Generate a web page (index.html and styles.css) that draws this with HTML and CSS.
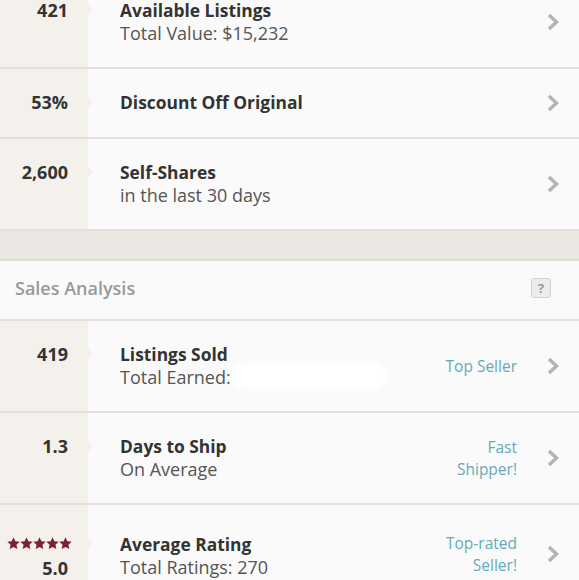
FILE: index.html
```html
<!DOCTYPE html>
<html>
<head>
<meta charset="utf-8">
<link rel="stylesheet" href="styles.css">
</head>
<body>
<div class="page">
  <div class="list first">
    <div class="row">
      <div class="num">421</div>
      <div class="main"><div class="title">Available Listings</div><div class="sub">Total Value: $15,232</div></div>
      <div class="chev"><svg width="12" height="18" viewBox="0 0 12 18"><path d="M2 2 L9.5 9 L2 16" fill="none" stroke="#b3b3b3" stroke-width="3.4"/></svg></div>
    </div>
    <div class="row">
      <div class="num">53%</div>
      <div class="main"><div class="title">Discount Off Original</div></div>
      <div class="chev"><svg width="12" height="18" viewBox="0 0 12 18"><path d="M2 2 L9.5 9 L2 16" fill="none" stroke="#b3b3b3" stroke-width="3.4"/></svg></div>
    </div>
    <div class="row">
      <div class="num">2,600</div>
      <div class="main"><div class="title">Self-Shares</div><div class="sub">in the last 30 days</div></div>
      <div class="chev"><svg width="12" height="18" viewBox="0 0 12 18"><path d="M2 2 L9.5 9 L2 16" fill="none" stroke="#b3b3b3" stroke-width="3.4"/></svg></div>
    </div>
  </div>
  <div class="band"></div>
  <div class="section-head">
    <span class="section-title">Sales Analysis</span>
    <span class="help">?</span>
  </div>
  <div class="list">
    <div class="row">
      <div class="num">419</div>
      <div class="main"><div class="title">Listings Sold</div><div class="sub">Total Earned: <span class="redact"></span></div></div>
      <div class="badge">Top Seller</div>
      <div class="chev"><svg width="12" height="18" viewBox="0 0 12 18"><path d="M2 2 L9.5 9 L2 16" fill="none" stroke="#b3b3b3" stroke-width="3.4"/></svg></div>
    </div>
    <div class="row">
      <div class="num">1.3</div>
      <div class="main"><div class="title">Days to Ship</div><div class="sub">On Average</div></div>
      <div class="badge">Fast<br>Shipper!</div>
      <div class="chev"><svg width="12" height="18" viewBox="0 0 12 18"><path d="M2 2 L9.5 9 L2 16" fill="none" stroke="#b3b3b3" stroke-width="3.4"/></svg></div>
    </div>
    <div class="row rating">
      <div class="num">
        <div class="stars">
          <svg width="65" height="13" viewBox="0 0 65 13">
            <defs><path id="st" d="M6.5 0.3 L8.32 4.29 L12.68 4.79 L9.45 7.76 L10.32 12.06 L6.5 9.9 L2.68 12.06 L3.55 7.76 L0.32 4.79 L4.68 4.29 Z"/></defs>
            <use href="#st" x="0"/><use href="#st" x="13"/><use href="#st" x="26"/><use href="#st" x="39"/><use href="#st" x="52"/>
          </svg>
        </div>
        5.0
      </div>
      <div class="main"><div class="title">Average Rating</div><div class="sub">Total Ratings: 270</div></div>
      <div class="badge">Top-rated<br>Seller!</div>
      <div class="chev"><svg width="12" height="18" viewBox="0 0 12 18"><path d="M2 2 L9.5 9 L2 16" fill="none" stroke="#b3b3b3" stroke-width="3.4"/></svg></div>
    </div>
  </div>
</div>
</body>
</html>
```
FILE: styles.css
```css
* { box-sizing: border-box; }
html, body { margin: 0; padding: 0; }
body {
  background: #fafafa;
  font-family: "Open Sans", "Liberation Sans", sans-serif;
  color: #333;
  width: 579px;
  height: 580px;
  overflow: hidden;
}
.page { width: 579px; }
.list.first { margin-top: -23px; }
.row {
  display: flex;
  align-items: stretch;
  border-bottom: 2px solid #e3dfdb;
  background: #fafafa;
}
.num {
  position: relative;
  width: 88px;
  flex: none;
  background: #f4f1ed;
  padding: 21px 20px 23px 0;
  text-align: right;
  font-weight: 700;
  font-size: 18px;
  line-height: 24px;
  color: #333;
}
.num::after {
  content: "";
  position: absolute;
  right: -5px;
  top: 27px;
  border-left: 5px solid #f4f1ed;
  border-top: 6px solid transparent;
  border-bottom: 6px solid transparent;
}
.main {
  flex: 1;
  padding: 21px 0 23px 32px;
}
.title {
  font-weight: 700;
  font-size: 17.4px;
  line-height: 24px;
  color: #333;
}
.sub {
  position: relative;
  font-size: 18px;
  line-height: 22px;
  color: #555;
}
.badge {
  align-self: center;
  text-align: right;
  font-size: 15.5px;
  line-height: 22px;
  color: #66a9bc;
  margin-right: 30px;
}
.chev {
  width: 12px;
  margin-right: 20px;
  display: flex;
  align-items: center;
  flex: none;
}
.chev svg { display: block; }
.rating .num { padding-top: 25px; }
.rating .num::after { top: 32px; }
.rating .main { padding-top: 27px; }
.band {
  height: 30px;
  background: #ebe8e4;
  border-bottom: 2px solid #dedad6;
}
.section-head {
  height: 60px;
  display: flex;
  align-items: center;
  justify-content: space-between;
  padding: 0 28px 5px 15px;
  border-bottom: 2px solid #e3dfdb;
  background: #fafafa;
}
.section-title {
  font-size: 18px;
  color: #999;
  font-weight: 600;
}
.help {
  width: 20px;
  height: 20px;
  border: 1px solid #d2d2d2;
  border-radius: 3px;
  background: #ececec;
  color: #999;
  font-size: 13px;
  font-weight: 700;
  line-height: 18px;
  text-align: center;
}
.stars {
  height: 26px;
  display: flex;
  align-items: center;
  justify-content: flex-end;
  margin-right: -4px;
  fill: #7b2136;
}
.stars svg { display: block; }
.redact {
  position: absolute;
  left: 112px;
  top: -3px;
  width: 155px;
  height: 26px;
  background: #fff;
  border-radius: 14px;
  filter: blur(2px);
}
```
